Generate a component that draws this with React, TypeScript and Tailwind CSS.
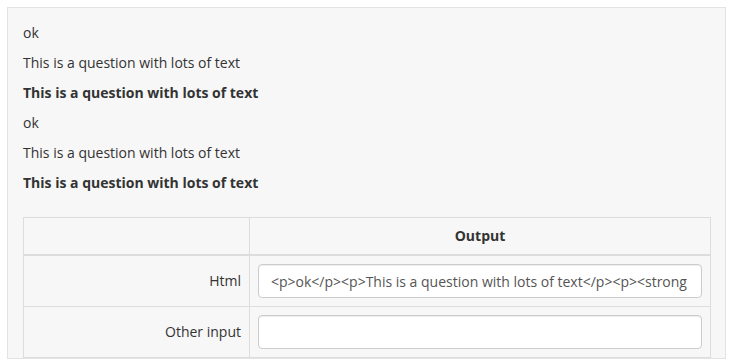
const lines = [
  { text: "ok", bold: false },
  { text: "This is a question with lots of text", bold: false },
  { text: "This is a question with lots of text", bold: true },
  { text: "ok", bold: false },
  { text: "This is a question with lots of text", bold: false },
  { text: "This is a question with lots of text", bold: true },
];

const html =
  "<p>ok</p><p>This is a question with lots of text</p><p><strong>This is a question with lots of text</strong></p>";

function Field({ value }: { value?: string }) {
  return (
    <input
      readOnly
      value={value ?? ""}
      className="block h-[34px] w-full rounded-[4px] border border-[#ccc] bg-white pl-[12px] pr-[14px] text-[14px] text-[#555] shadow-[inset_0_1px_1px_rgba(0,0,0,0.075)] outline-none"
    />
  );
}

export default function App() {
  return (
    <div className="min-h-screen bg-white pl-[7px] pt-[7px] font-['Open_Sans',sans-serif] text-[14px] leading-[20px] text-[#333]">
      <div className="w-[719px] border border-[#e3e3e3] bg-[#f7f7f7] pl-[15px] pr-[14px] pt-[15px]">
        {lines.map((l, i) => (
          <p key={i} className={`mb-[10px] ${l.bold ? "font-bold" : ""}`}>
            {l.text}
          </p>
        ))}
        <table className="mt-[24px] w-[688px] table-fixed border-collapse">
          <colgroup>
            <col className="w-[226px]" />
            <col />
          </colgroup>
          <thead>
            <tr>
              <th className="h-[37px] border border-b-2 border-[#ddd] p-[8px]"></th>
              <th className="border border-b-2 border-[#ddd] p-[8px] text-center font-bold">
                Output
              </th>
            </tr>
          </thead>
          <tbody>
            <tr>
              <td className="border border-[#ddd] p-[8px] text-right align-middle">Html</td>
              <td className="border border-[#ddd] p-[8px]">
                <Field value={html} />
              </td>
            </tr>
            <tr>
              <td className="border border-[#ddd] p-[8px] text-right align-middle">Other input</td>
              <td className="border border-[#ddd] p-[8px]">
                <Field />
              </td>
            </tr>
          </tbody>
        </table>
      </div>
    </div>
  );
}
